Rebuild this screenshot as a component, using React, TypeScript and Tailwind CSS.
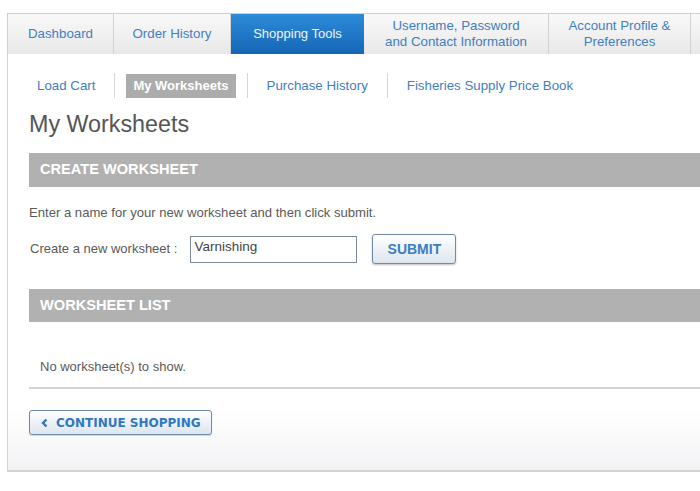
import React from "react";

const tabs = [
  { label: ["Dashboard"], w: "w-[106px]" },
  { label: ["Order History"], w: "w-[117px]" },
  { label: ["Shopping Tools"], w: "w-[133px]", active: true },
  { label: ["Username, Password", "and Contact Information"], w: "w-[185px]" },
  { label: ["Account Profile &", "Preferences"], w: "w-[142px]" },
  { label: [], w: "w-[90px]" },
];

const sub = ["Load Cart", "My Worksheets", "Purchase History", "Fisheries Supply Price Book"];

export default function App() {
  return (
    <div
      className="w-[700px] h-[491px] overflow-hidden bg-white pt-[13px] pl-[7px]"
      style={{ fontFamily: '"Liberation Sans", Arial, sans-serif' }}
    >
      <div className="w-[780px]">
        {/* Tabs */}
        <div className="flex h-[41px] border-t border-l border-[#cfcfcf]">
          {tabs.map((t, i) =>
            t.active ? (
              <div
                key={i}
                className={`${t.w} shrink-0 flex flex-col items-center justify-center bg-gradient-to-b from-[#2d8bd9] to-[#1666b6] text-[#eef5fc] text-[13px] leading-[16px]`}
              >
                {t.label.map((l) => (
                  <span key={l}>{l}</span>
                ))}
              </div>
            ) : (
              <div
                key={i}
                className={`${t.w} shrink-0 flex flex-col items-center justify-center border-r border-[#d2d2d2] bg-gradient-to-b from-[#f9f9f9] to-[#e8e8e8] text-[#3f80c0] text-[13.3px] leading-[16px]`}
              >
                {t.label.map((l) => (
                  <span key={l}>{l}</span>
                ))}
              </div>
            )
          )}
        </div>

        {/* Panel */}
        <div className="border-l border-b-2 border-[#d3d3d3] bg-gradient-to-b from-white from-[85%] to-[#f3f3f5] pl-[21px] pt-[19px] pb-[35px]">
          {/* Sub nav */}
          <div className="flex items-center h-[25px]">
            {sub.map((s, i) => (
              <React.Fragment key={s}>
                {i > 0 && <div className="w-px h-[25px] bg-[#d6d6d6] mx-[11px]" />}
                {s === "My Worksheets" ? (
                  <div className="px-[7px] h-[24px] flex items-center bg-[#acacac] text-white font-bold text-[13px]">
                    {s}
                  </div>
                ) : (
                  <div className="px-2 text-[13.3px] text-[#3f80c0]">{s}</div>
                )}
              </React.Fragment>
            ))}
          </div>

          <h1 className="mt-[11px] text-[23.3px] leading-[30px] text-[#555]">My Worksheets</h1>

          <div className="mt-[14px] h-[34px] bg-[#b1b1b1] flex items-center pl-[11px] text-white font-bold text-[14.6px]">
            CREATE WORKSHEET
          </div>

          <p className="mt-[18px] text-[13.1px] leading-[16px] text-[#5a5a5a]">
            Enter a name for your new worksheet and then click submit.
          </p>

          <div className="mt-[13px] flex items-center h-[30px]">
            <span className="text-[13px] text-[#5a5a5a] pl-[1px]">Create a new worksheet :</span>
            <div className="ml-[13px] w-[167px] h-[27px] border border-[#7d8b98] flex items-center pl-[3px] text-[13.5px] text-[#444] pb-[3px]">
              Varnishing
            </div>
            <button className="ml-[15px] w-[84px] h-[30px] rounded-[3px] border border-[#6f8aa6] bg-gradient-to-b from-white to-[#dde5ee] shadow-[0_1px_2px_rgba(0,0,0,0.25)] text-[#3a7ec3] font-bold text-[14px]">
              SUBMIT
            </button>
          </div>

          <div className="mt-[25px] h-[33px] bg-[#b1b1b1] flex items-center pl-[11px] text-white font-bold text-[14.6px]">
            WORKSHEET LIST
          </div>

          <div className="pt-[37px] pb-[12px] pl-[11px] border-b-2 border-[#d4d4d4] text-[13px] leading-[16px] text-[#5a5a5a]">
            No worksheet(s) to show.
          </div>

          <button
            className="mt-[21px] w-[183px] h-[25px] rounded-[3px] border border-[#6f8aa6] bg-gradient-to-b from-white to-[#dde5ee] shadow-[0_1px_1px_rgba(0,0,0,0.15)] flex items-center pl-[11px] text-[#2f78c0] font-bold text-[12px] gap-[8px]"
            style={{ fontFamily: '"DejaVu Sans", Verdana, sans-serif' }}
          >
            <svg width="7" height="10" viewBox="0 0 7 10">
              <path d="M5.5 1.5 L2 5 L5.5 8.5" stroke="#2f78c0" strokeWidth="2.4" fill="none" />
            </svg>
            <span>CONTINUE SHOPPING</span>
          </button>
        </div>
      </div>
    </div>
  );
}
